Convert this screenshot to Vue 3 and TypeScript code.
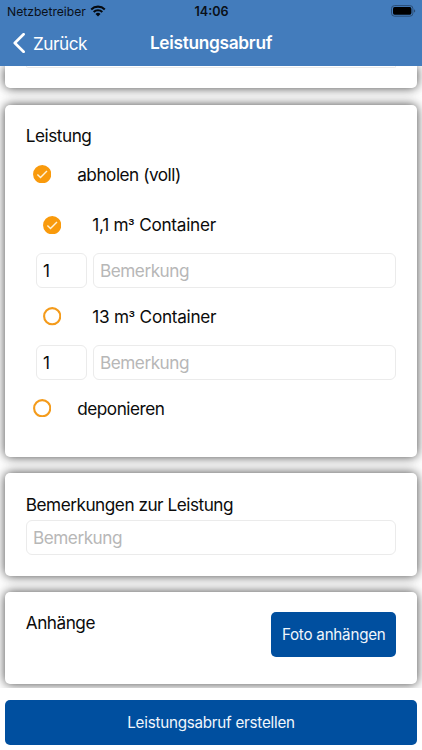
<script setup lang="ts">
import { ref } from 'vue'

interface Container {
  size: string
  checked: boolean
  amount: string
  note: string
}

const containers = ref<Container[]>([
  { size: '1,1', checked: true, amount: '1', note: '' },
  { size: '13', checked: false, amount: '1', note: '' },
])
const pickup = ref(true)
const deposit = ref(false)
const remark = ref('')
</script>

<template>
  <div class="screen">
    <header class="header">
      <div class="status">
        <div class="carrier">
          <span class="carrier-name">Netzbetreiber</span>
          <svg class="wifi" viewBox="0 0 16 12" width="16" height="12">
            <path d="M1.2 4.4a9.7 9.7 0 0 1 13.6 0" />
            <path d="M3.7 7a6.1 6.1 0 0 1 8.6 0" />
            <path class="dot" d="M8 11.4 5.5 8.9a3.6 3.6 0 0 1 5 0z" />
          </svg>
        </div>
        <span class="clock">14:06</span>
        <svg class="battery" viewBox="0 0 25 12" width="25" height="12">
          <rect class="shell" x="0.5" y="0.6" width="21.4" height="10.6" rx="3" />
          <rect x="2" y="2.1" width="18.4" height="7.6" rx="1.6" />
          <path class="cap" d="M23 4.2c1.7.6 1.7 2.8 0 3.4z" />
        </svg>
      </div>
      <nav class="nav">
        <div class="back">
          <svg viewBox="0 0 13 20" width="13" height="20"><path d="M10.6 1.3 1.8 10l8.8 8.7" /></svg>
          <span>Zurück</span>
        </div>
        <h1>Leistungsabruf</h1>
      </nav>
    </header>

    <main class="content">
      <section class="card first"><div class="field-end"></div></section>

      <section class="card services">
        <h2>Leistung</h2>
        <div class="option" @click="pickup = !pickup">
          <span class="check" :class="{ on: pickup }">
            <svg viewBox="0 0 18.4 18.4">
              <circle cx="9.2" cy="9.2" r="8.1" />
              <path v-if="pickup" d="m4.4 9.6 3.1 3 6.5-6.7" />
            </svg>
          </span>
          <span>abholen (voll)</span>
        </div>
        <div v-for="item in containers" :key="item.size" class="container-group">
          <div class="option nested" @click="item.checked = !item.checked">
            <span class="check" :class="{ on: item.checked }">
              <svg viewBox="0 0 18.4 18.4">
                <circle cx="9.2" cy="9.2" r="8.1" />
                <path v-if="item.checked" d="m4.4 9.6 3.1 3 6.5-6.7" />
              </svg>
            </span>
            <span class="container-label">{{ item.size }} m<span class="cubic">³</span> Container</span>
          </div>
          <div class="fields">
            <input v-model="item.amount" class="field amount" />
            <input v-model="item.note" class="field note" placeholder="Bemerkung" />
          </div>
        </div>
        <div class="option last" @click="deposit = !deposit">
          <span class="check" :class="{ on: deposit }">
            <svg viewBox="0 0 18.4 18.4">
              <circle cx="9.2" cy="9.2" r="8.1" />
              <path v-if="deposit" d="m4.4 9.6 3.1 3 6.5-6.7" />
            </svg>
          </span>
          <span>deponieren</span>
        </div>
      </section>

      <section class="card remarks">
        <h2>Bemerkungen zur Leistung</h2>
        <input v-model="remark" class="field" placeholder="Bemerkung" />
      </section>

      <section class="card attachments">
        <h2>Anhänge</h2>
        <button class="button photo" type="button">Foto anhängen</button>
      </section>
    </main>

    <footer class="footer">
      <button class="button submit" type="button">Leistungsabruf erstellen</button>
    </footer>
  </div>
</template>

<style>
body {
  margin: 0;
  background: #fff;
}
</style>

<style scoped>
* {
  box-sizing: border-box;
}
.screen {
  display: flex;
  flex-direction: column;
  width: 422px;
  height: 750px;
  overflow: hidden;
  background: #fff;
  color: #0b0b0b;
  font-family: Inter, 'Liberation Sans', sans-serif;
  font-size: 17.2px;
  letter-spacing: -0.48px;
}
.header {
  position: relative;
  z-index: 1;
  flex: none;
  height: 65.6px;
  background: #437cbc;
}
.status {
  display: grid;
  grid-template-columns: 1fr auto 1fr;
  align-items: center;
  height: 22px;
  padding: 0 6px 0 7px;
  color: #0a1018;
}
.carrier {
  display: flex;
  align-items: center;
  gap: 5px;
  font-size: 12.2px;
  letter-spacing: -0.02px;
}
.carrier .wifi {
  margin: -1px 0 0 -1px;
}
.wifi path {
  fill: none;
  stroke: #050a10;
  stroke-width: 2.1;
}
.wifi .dot {
  fill: #050a10;
  stroke: none;
}
.clock {
  font-size: 12.6px;
  font-weight: 600;
  letter-spacing: 0;
}
.battery {
  justify-self: end;
  margin-top: -1px;
}
.battery .shell {
  fill: none;
  stroke: #2b4d75;
}
.battery .cap {
  fill: #2b4d75;
}
.nav {
  display: grid;
  grid-template-columns: 1fr auto 1fr;
  align-items: center;
  height: 43px;
  padding: 0 13px;
  color: #fff;
}
.back {
  display: flex;
  align-items: center;
  gap: 7px;
}
.back svg,
.back span {
  margin-top: -1px;
}
.back path {
  fill: none;
  stroke: #fff;
  stroke-width: 2.7;
  stroke-linecap: round;
  stroke-linejoin: round;
}
h1 {
  margin: -2px 0 0;
  font-size: 17.3px;
  font-weight: 600;
  letter-spacing: -0.3px;
}
.content {
  flex: none;
  display: flex;
  flex-direction: column;
  gap: 16.2px;
  height: 622.6px;
  padding: 0 5.4px;
  overflow: hidden;
}
.card {
  flex: none;
  padding: 0 20.4px;
  border-radius: 5px;
  background: #fff;
  box-shadow: 0 0 11px rgba(0, 0, 0, 0.74);
}
.first {
  height: 22.8px;
  border-radius: 0 0 5px 5px;
}
.field-end {
  height: 2px;
  border: 1px solid #ebebeb;
  border-top: 0;
  border-radius: 0 0 6px 6px;
}
.services {
  height: 352.6px;
  padding-top: 20.4px;
}
h2 {
  margin: 0;
  font-size: 17.2px;
  font-weight: 400;
  line-height: 22px;
}
.option {
  display: flex;
  align-items: center;
  gap: 26px;
  height: 22px;
  margin-top: 16.2px;
  padding-left: 7px;
}
.nested {
  gap: 31.2px;
  margin-top: 0;
  padding-left: 17px;
}
.container-label {
  letter-spacing: -0.28px;
}
.cubic {
  font-family: Roboto, sans-serif;
  letter-spacing: 0;
}
.container-group {
  height: 62.8px;
  margin-top: 28.8px;
}
.option.last {
  margin-top: 28.8px;
}
.check {
  flex: none;
  width: 18.4px;
  height: 18.4px;
}
.check svg {
  display: block;
  width: 100%;
  height: 100%;
}
.check circle {
  fill: none;
  stroke: #f49b1b;
  stroke-width: 2.1;
}
.check.on circle {
  fill: #f99a0c;
  stroke: #f99a0c;
}
.check path {
  fill: none;
  stroke: #fff3d8;
  stroke-width: 1.4;
}
.fields {
  display: grid;
  grid-template-columns: 51px 1fr;
  gap: 6px;
  margin-top: 17.2px;
  padding-left: 10px;
}
.field {
  display: block;
  width: 100%;
  height: 35px;
  margin: 0;
  padding: 0 6.2px;
  border: 1px solid #ebebeb;
  border-radius: 6px;
  outline: 0;
  background: #fff;
  color: #0b0b0b;
  font: inherit;
  letter-spacing: inherit;
}
.field::placeholder {
  color: #b7b7b7;
  opacity: 1;
}
.remarks {
  height: 102.4px;
  padding-top: 20.4px;
}
.remarks .field {
  margin-top: 4.6px;
}
.attachments {
  display: flex;
  align-items: flex-start;
  justify-content: space-between;
  height: 91.6px;
  padding-top: 20px;
}
.button {
  height: 45px;
  margin: 0;
  padding: 0;
  border: 0;
  border-radius: 5px;
  background: #004f9f;
  color: #f0f6fc;
  font-family: inherit;
  font-size: 15.2px;
  letter-spacing: -0.24px;
}
.photo {
  width: 125px;
}
.footer {
  padding: 11.4px 5.4px 0;
}
.submit {
  display: block;
  width: 100%;
}
</style>
